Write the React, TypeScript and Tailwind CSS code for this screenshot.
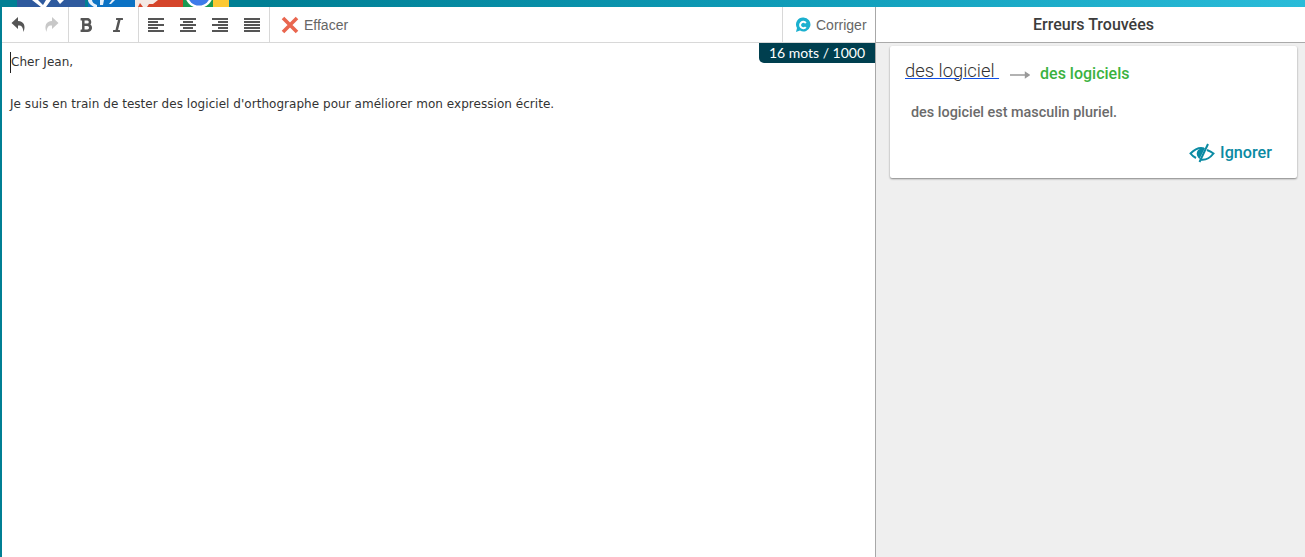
import { FaBold, FaItalic } from "react-icons/fa";

const roboto = "font-['Roboto',sans-serif]";
const arial = "font-['Liberation_Sans',sans-serif]";

function TopStrip() {
  return (
    <div className="h-[7px] overflow-hidden bg-[linear-gradient(90deg,#007f94_0%,#007f94_20%,#0f9cb8_60%,#2abcd9_100%)]">
      <svg width="232" height="7" viewBox="0 0 232 7" className="block">
        <rect x="17" width="68" height="7" fill="#2f5a9e" />
        <path d="M32 0h6l5 5 3-5h5l-5 7h-5zM57 0h7l-4 4z" fill="#fff" />
        <rect x="88" width="47" height="7" fill="#0b72c4" />
        <path d="M88 0h4c0 2 2 4 5 5v2h-3c-3-2-6-4-6-7zM100 0h4l-1 5h-3zM112 0h3l-4 4h-2z" fill="#e6f0fa" />
        <rect x="135" width="50" height="7" fill="#d5452a" />
        <path d="M135 0h23l-5 4h-4l-2 3h-4l-3-4-2 4h-3z" fill="#f4e9e4" />
        <rect x="183" width="30" height="7" fill="#1a9a52" />
        <circle cx="199" cy="-6" r="14" fill="#fff" />
        <circle cx="199" cy="-6" r="11.500" fill="#3d7bea" />
        <rect x="213" width="16" height="7" fill="#fcc934" />
      </svg>
    </div>
  );
}

function AlignIcon({ align }: { align: "left" | "center" | "right" | "justify" }) {
  const short = align === "justify" ? 16 : 10;
  const x = align === "left" || align === "justify" ? 0 : align === "center" ? 3 : 6;
  return (
    <svg width="16" height="14" viewBox="0 0 16 14" fill="#555" shapeRendering="crispEdges">
      <rect y="0" width="16" height="2" />
      <rect x={x} y="3" width={short} height="2" />
      <rect y="6" width="16" height="2" />
      <rect x={x} y="9" width={short} height="2" />
      <rect y="12" width="16" height="2" />
    </svg>
  );
}

function UndoIcon({ flip, color }: { flip?: boolean; color: string }) {
  return (
    <svg width="16" height="17" viewBox="0 0 16 17" fill={color} className={flip ? "-scale-x-100" : ""}>
      <path d="M7 1 .5 7 7 13V9.500c3.500-.3 5 1.500 5.500 6.500C15 10 13 5 7 5z" />
    </svg>
  );
}

function ToolBtn({ children }: { children: React.ReactNode }) {
  return <button className="w-8 h-full flex items-center justify-center text-[#555]">{children}</button>;
}

function Toolbar() {
  return (
    <div className="h-[36px] flex items-stretch border-b border-[#d8d8d8]">
      <div className="w-[67px] pl-[1px] flex border-r border-[#d8d8d8]">
        <ToolBtn><UndoIcon color="#555" /></ToolBtn>
        <ToolBtn><UndoIcon flip color="#c8c8c8" /></ToolBtn>
      </div>
      <div className="w-[70px] pl-[1px] flex border-r border-[#d8d8d8]">
        <ToolBtn><FaBold size={16} /></ToolBtn>
        <ToolBtn><FaItalic size={16} /></ToolBtn>
      </div>
      <div className="w-[131px] pl-[1px] flex border-r border-[#d8d8d8]">
        <ToolBtn><AlignIcon align="left" /></ToolBtn>
        <ToolBtn><AlignIcon align="center" /></ToolBtn>
        <ToolBtn><AlignIcon align="right" /></ToolBtn>
        <ToolBtn><AlignIcon align="justify" /></ToolBtn>
      </div>
      <button className={`ml-[11px] flex items-center gap-[5px] text-[14px] text-[#666] ${arial}`}>
        <svg width="18" height="18" viewBox="0 0 18 18">
          <path d="M2 2l14 14M16 2L2 16" stroke="#e9664f" strokeWidth="3.600" />
        </svg>
        <span className="pt-[1px]">Effacer</span>
      </button>
      <button className={`ml-auto w-[93px] pl-[12px] flex items-center gap-[5px] border-l border-[#d8d8d8] text-[14px] text-[#666] ${arial}`}>
        <svg width="16" height="16" viewBox="0 0 16 16">
          <path d="M8.500.5a7 7 0 1 1-3.500 13.100L1 15l1-4A7 7 0 0 1 8.500.5z" fill="#1bb0cf" />
          <path d="M10.800 6A3.200 3.200 0 1 0 10.800 10" fill="none" stroke="#fff" strokeWidth="2" />
        </svg>
        <span className="pt-[1px]">Corriger</span>
      </button>
    </div>
  );
}

function Editor() {
  return (
    <div className="relative w-[876px] shrink-0 border-l-2 border-l-[#007f94] border-r border-r-[#a8a8a8] flex flex-col">
      <Toolbar />
      <div className="absolute right-0 top-[36px] h-[20px] w-[116px] rounded-bl-[5px] bg-[#003f4f] text-white text-[14px] leading-[20px] text-center font-['Lato',sans-serif]">
        16 mots / 1000
      </div>
      <div className="pl-[8px] pt-[9px] text-[12px] leading-[21px] tracking-[0.04px] text-[#333] font-['DejaVu_Sans',sans-serif]">
        <p className="border-l border-l-[#222] w-fit">Cher Jean,</p>
        <p>&nbsp;</p>
        <p>Je suis en train de tester des logiciel d'orthographe pour améliorer mon expression écrite.</p>
      </div>
    </div>
  );
}

function ErrorCard() {
  return (
    <div className={`ml-[14px] mr-[8px] mt-[3px] h-[132px] rounded-[2px] bg-white shadow-[0_1px_2px_rgba(0,0,0,0.45)] ${roboto}`}>
      <div className="flex items-center pl-[15px] pt-[13px]">
        <span className="text-[18.4px] leading-[24px] font-light text-[#333] underline decoration-[#0f4fe8] decoration-1 underline-offset-[1px]">des logiciel&nbsp;</span>
        <svg width="20" height="8" viewBox="0 0 20 8" className="ml-[11px] mt-[8px]">
          <path d="M0 4h18M15.500 1.500 19 4l-3.500 2.500z" stroke="#999" strokeWidth="1.400" fill="#999" />
        </svg>
        <span className="ml-[10px] mt-[5px] text-[16px] leading-[19px] font-medium text-[#3bb23f]">des logiciels</span>
      </div>
      <p className="pl-[21px] mt-[20px] text-[14.4px] leading-[20px] font-medium text-[#6b6b6b]">des logiciel est masculin pluriel.</p>
      <div className="flex justify-end items-center gap-[5px] pr-[25px] mt-[18px] text-[16.2px] font-medium text-[#0a8aa3]">
        <svg width="26" height="20" viewBox="0 0 26 20" fill="none">
          <path d="M15 5.500C10 4 5.500 6.500 1.500 10.500c1.500 2 3.500 3.500 5.500 4.500M18 7c2.500 1 4.500 2 6.500 3.500C21 15 16 17.500 11 16.500" stroke="#0a8aa3" strokeWidth="2" />
          <path d="M8 9c1-3 4-4 8-4l-5.500 11C8.500 14 7 11.500 8 9z" fill="#0a8aa3" />
          <path d="M19 1 10.500 19" stroke="#0a8aa3" strokeWidth="2" />
        </svg>
        Ignorer
      </div>
    </div>
  );
}

export default function App() {
  return (
    <div className="h-[557px] w-[1305px] overflow-hidden bg-white flex flex-col">
      <TopStrip />
      <div className="flex-1 flex min-h-0">
        <Editor />
        <div className="flex-1 flex flex-col bg-[#efefef]">
          <div className={`h-[36px] shrink-0 pl-[6px] bg-white border-b border-[#aaa] flex items-center justify-center text-[16px] font-medium text-[#3c3c3c] ${roboto}`}>
            Erreurs Trouvées
          </div>
          <ErrorCard />
        </div>
      </div>
    </div>
  );
}
